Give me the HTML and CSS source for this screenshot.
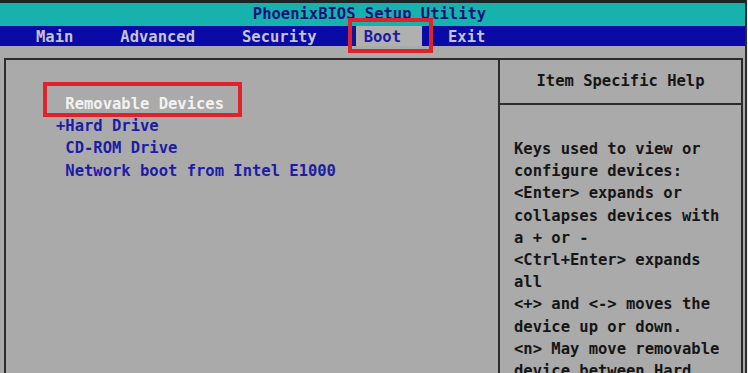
FILE: index.html
```html
<!DOCTYPE html>
<html lang="en">

<head>
    <meta charset="UTF-8">
    <meta name="viewport" content="width=device-width, initial-scale=1.0">
    <title>PhoenixBIOS Setup Utility</title>
    <link rel="stylesheet" href="styles.css">
</head>

<body>
    <div class="screen">
        <div class="title">PhoenixBIOS Setup Utility</div>
        <div class="menubar">
            <span class="tab">Main</span>
            <span class="tab">Advanced</span>
            <span class="tab">Security</span>
            <span class="tab active">Boot</span>
            <span class="tab">Exit</span>
        </div>

        <div class="frame">
            <div class="devices">
                <div class="item selected"> <span class="marked">Removable Devices</span></div>
                <div class="item">+Hard Drive</div>
                <div class="item"> CD-ROM Drive</div>
                <div class="item"> Network boot from Intel E1000</div>
            </div>
            <div class="help">
                <div class="help-title">Item Specific Help</div>
                <div class="help-body">
                    Keys used to view or<br>
                    configure devices:<br>
                    &lt;Enter&gt; expands or<br>
                    collapses devices with<br>
                    a + or -<br>
                    &lt;Ctrl+Enter&gt; expands<br>
                    all<br>
                    &lt;+&gt; and &lt;-&gt; moves the<br>
                    device up or down.<br>
                    &lt;n&gt; May move removable<br>
                    device between Hard
                </div>
            </div>
        </div>
    </div>
</body>

</html>
```

FILE: styles.css
```css
body {
    margin: 0;
    height: 373px;
    overflow: hidden;
    background-color: #f4f4f4;
    font-family: "DejaVu Sans Mono", "Liberation Mono", monospace;
    font-weight: bold;
    font-size: 15.5px;
}

.screen {
    width: 745px;
    height: 373px;
    background-color: #aaaaaa;
    border-top: 3px solid #1c2424;
    border-right: 2px solid #2b2b2b;
}

.title {
    height: 23px;
    line-height: 23px;
    padding-right: 6px;
    text-align: center;
    background-color: #17b2ae;
    color: #12127a;
}

.menubar {
    display: flex;
    gap: 31px;
    height: 20px;
    padding-left: 28px;
    background-color: #0a0aa6;
}

.tab {
    height: 20px;
    line-height: 23px;
    padding: 0 8px;
    color: #c4c4d4;
}

.tab.active {
    position: relative;
    margin-left: -3px;
    margin-right: -13px;
    padding-right: 21px;
    background-color: #b0b0b0;
    color: #1c1ca0;
    border-left: 3px solid #161680;
}

.tab.active::after {
    content: "";
    position: absolute;
    top: -8px;
    left: -8px;
    right: -11px;
    bottom: -7px;
    border: 4px solid #e0222c;
}

.frame {
    display: flex;
    box-sizing: border-box;
    width: 739px;
    height: 320px;
    margin: 12px 0 0 4px;
    border: 2px solid #2c2c2c;
    border-bottom: none;
}

.devices {
    width: 442px;
    padding: 33px 0 0 50px;
    line-height: 22.2px;
    color: #1c1ca6;
}

.item {
    white-space: pre;
}

.item.selected {
    color: #f2f2f2;
}

.marked {
    position: relative;
}

.marked::after {
    content: "";
    position: absolute;
    top: -13px;
    left: -22px;
    right: -18px;
    bottom: -4px;
    border: 4px solid #e0222c;
}

.help {
    flex: 1;
    border-left: 2px solid #2c2c2c;
    color: #161616;
}

.help-title {
    height: 43px;
    line-height: 43px;
    text-align: center;
    border-bottom: 2px solid #2c2c2c;
}

.help-body {
    padding: 33px 0 0 14px;
    line-height: 22.2px;
    white-space: nowrap;
}
```
